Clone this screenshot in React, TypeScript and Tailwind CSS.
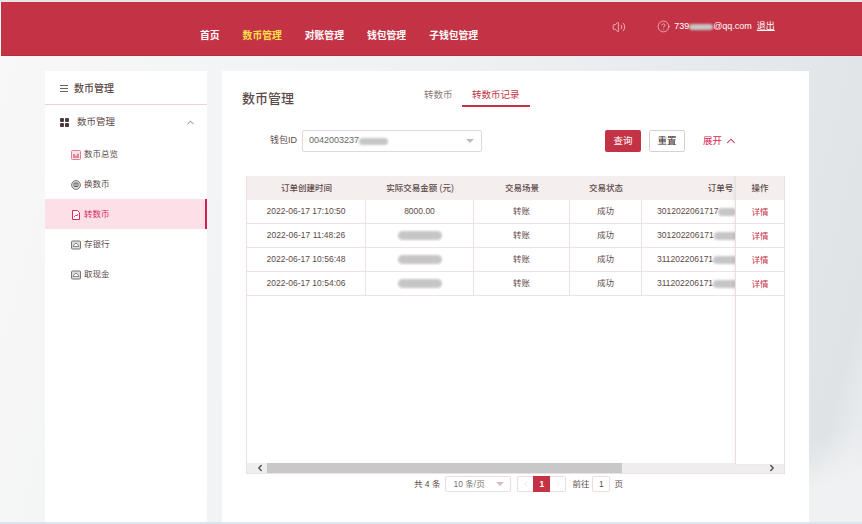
import React from "react";
import { ChevronLeft, ChevronRight, ChevronUp, CircleHelp, Volume2 } from "lucide-react";

const font = "font-['Liberation_Sans','Noto_Sans_CJK_SC',sans-serif]";

const nav = ["首页", "数币管理", "对账管理", "钱包管理", "子钱包管理"];

const rows = [
  { time: "2022-06-17 17:10:50", amount: "8000.00", order: "3012022061717", orderBlur: "w-[18px]" },
  { time: "2022-06-17 11:48:26", amount: "", order: "301202206171", orderBlur: "w-[26px]" },
  { time: "2022-06-17 10:56:48", amount: "", order: "311202206171", orderBlur: "w-[26px]" },
  { time: "2022-06-17 10:54:06", amount: "", order: "311202206171", orderBlur: "w-[26px]" },
];

const Blur = ({ className }: { className: string }) => (
  <span className={`inline-block rounded-full bg-[#c6c6c6] blur-[1px] ${className}`} />
);

const MenuIcon = ({ kind, active }: { kind: string; active?: boolean }) => {
  if (kind === "chart") {
    return (
      <svg width="10" height="10" viewBox="0 0 10 10" fill="none">
        <rect x="0.5" y="0.5" width="9" height="9" rx="1" fill="#fbe3ea" stroke="#e8799a" />
        <path d="M3 4v4M5 5.5V8M7 3.5V8" stroke="#c43345" strokeWidth="1" />
      </svg>
    );
  }
  if (kind === "coin") {
    return (
      <svg width="10" height="10" viewBox="0 0 10 10" fill="none">
        <circle cx="5" cy="5" r="4.4" fill="#ddd" stroke="#777" />
        <path d="M3 3h4v3.5H3zM5 3v4" stroke="#555" strokeWidth="0.8" />
      </svg>
    );
  }
  if (kind === "doc") {
    return (
      <svg width="10" height="10" viewBox="0 0 10 10" fill="none">
        <path d="M1.5.5h5l2 2v7h-7z" fill="#fff" stroke={active ? "#e0245e" : "#777"} />
        <path d="M3 7l2-2 1 1 1-2" stroke={active ? "#e0245e" : "#777"} strokeWidth="0.8" />
      </svg>
    );
  }
  return (
    <svg width="10" height="10" viewBox="0 0 10 10" fill="none">
      <rect x="0.5" y="1" width="9" height="8" rx="1" fill="#ddd" stroke="#777" />
      <path d="M2 6.5L4 3.5h2L8 6.5z" fill="#fff" stroke="#666" strokeWidth="0.7" />
    </svg>
  );
};

const subMenu = [
  { label: "数币总览", icon: "chart" },
  { label: "换数币", icon: "coin" },
  { label: "转数币", icon: "doc", active: true },
  { label: "存银行", icon: "bank" },
  { label: "取现金", icon: "bank" },
];

const cols = "grid grid-cols-[119px_108px_96px_72px_1fr]";

export default function App() {
  return (
    <div
      className={`${font} flex h-[524px] w-[862px] flex-col overflow-hidden bg-[linear-gradient(160deg,transparent_88%,#f0f1f3_94%),linear-gradient(105deg,#f8f8f8_0%,#f3f4f5_25%,#f0f1f3_45%,#e8ebee_70%,#dfe3e6_94%,#e8ebee_97%,#dee2e5_100%)]`}
    >
      <div className="h-[2px] bg-[#e9e4e4]" />
      <header className="relative ml-px flex h-[54px] shrink-0 border-b border-[#b52c3e] bg-[#c43345]">
        <nav className="ml-[199px] flex h-full items-center gap-[23px] pt-[16px] text-[9.8px] font-bold text-white">
          {nav.map((item, i) => (
            <span key={item} className={i === 1 ? "text-[#fde047]" : ""}>
              {item}
            </span>
          ))}
        </nav>
        <div className="ml-[134px] flex h-full items-start pt-[18px] text-[9px] text-white">
          <Volume2 size={14} strokeWidth={1} />
          <CircleHelp size={13} strokeWidth={1} className="ml-[31px] mr-[4px]" />
          <span className="flex items-center">
            739
            <Blur className="h-[6px] w-[24px]" />
            @qq.com
          </span>
          <span className="ml-[5px] underline">退出</span>
        </div>
      </header>

      <div className="flex min-h-0 flex-1 items-stretch gap-[15px] pl-[45px] pt-[15px]">
        {/* sidebar */}
        <aside className="w-[162px] shrink-0 bg-white text-[#5c4a4a]">
          <div className="flex h-[34px] items-center gap-[6px] border-b border-[#ecd2d7] pl-[15px] pt-[1px] text-[10px] font-medium">
            <span className="flex w-[8px] flex-col gap-[2px]">
              <span className="h-px bg-[#666]" />
              <span className="h-px bg-[#666]" />
              <span className="h-px bg-[#666]" />
            </span>
            数币管理
          </div>
          <div className="flex h-[34px] items-center pl-[15px] pr-[11px] text-[9.5px]">
            <span className="mr-[8px] grid grid-cols-2 gap-px">
              <span className="h-[4px] w-[4px] rounded-[1px] bg-[#4b3a3a]" />
              <span className="h-[4px] w-[4px] rounded-[1px] bg-[#4b3a3a]" />
              <span className="h-[4px] w-[4px] rounded-[1px] bg-[#4b3a3a]" />
              <span className="h-[4px] w-[4px] rounded-[1px] bg-[#4b3a3a]" />
            </span>
            数币管理
            <ChevronUp size={11} strokeWidth={1.4} className="ml-auto text-[#444]" />
          </div>
          <div className="flex flex-col">
            {subMenu.map((m) => (
              <div
                key={m.label}
                className={`flex h-[30px] items-center gap-[3px] pl-[26px] pt-px text-[8.5px] ${
                  m.active ? "border-r-2 border-[#d81e4f] bg-[#fce0e7] text-[#e0245e]" : ""
                }`}
              >
                <MenuIcon kind={m.icon} active={m.active} />
                {m.label}
              </div>
            ))}
          </div>
        </aside>

        {/* main */}
        <main className="flex w-[587px] shrink-0 flex-col bg-white pl-[20px] pr-[24px] text-[#5c4a4a]">
          <div className="relative flex h-[36px] items-start">
            <h1 className="mt-[19px] text-[13px] font-medium leading-[18px]">数币管理</h1>
            <div className="ml-[130px] flex pt-[17px] text-[9.5px]">
              <span className="w-[39px] text-[#8a7b7b]">转数币</span>
              <span className="ml-[-1px] border-b-2 border-[#c43345] px-[10px] pb-[3px] text-[#c43345]">
                转数币记录
              </span>
            </div>
          </div>

          <div className="mt-[23px] flex h-[22px] items-center pl-[28px] text-[9px]">
            <span className="mr-[5px]">钱包ID</span>
            <div className="flex h-[22px] w-[180px] items-center rounded-[2px] border border-[#e8d5d8] pl-[6px] pr-[7px] text-[9px] text-[#666]">
              0042003237
              <Blur className="h-[7px] w-[29px]" />
              <span className="ml-auto h-0 w-0 border-x-[4px] border-t-[4px] border-x-transparent border-t-[#c4b8b8]" />
            </div>
            <button className="ml-[123px] h-[22px] w-[36px] rounded-[2px] bg-[#c43345] text-[9.5px] text-white">
              查询
            </button>
            <button className="ml-[8px] h-[22px] w-[36px] rounded-[2px] border border-[#d8d0d0] text-[9.5px] text-[#3b2a2a]">
              重置
            </button>
            <span className="ml-[18px] flex items-center gap-[2px] text-[9.5px] text-[#d81e4f]">
              展开
              <ChevronUp size={14} strokeWidth={1.8} />
            </span>
          </div>

          {/* table */}
          <div className="relative mt-[24px] ml-[4px] flex h-[298px] w-[539px] flex-col overflow-hidden border-x border-b border-[#f0dfe2] text-[8.5px]">
            <div className={`${cols} h-[24px] shrink-0 items-center bg-[#f5eeee] text-center font-medium`}>
              <span>订单创建时间</span>
              <span>实际交易金额 (元)</span>
              <span>交易场景</span>
              <span>交易状态</span>
              <span className="pl-[15px]">订单号</span>
            </div>
            {rows.map((r) => (
              <div
                key={r.time}
                className={`${cols} h-[24px] shrink-0 border-b border-[#efe2e5] text-center leading-[23px]`}
              >
                <span className="border-r border-[#efe2e5]">{r.time}</span>
                <span className="border-r border-[#efe2e5]">
                  {r.amount || <Blur className="h-[9px] w-[44px] align-middle" />}
                </span>
                <span className="border-r border-[#efe2e5]">转账</span>
                <span className="border-r border-[#efe2e5]">成功</span>
                <span className="whitespace-nowrap pl-[15px] text-left">
                  {r.order}
                  <Blur className={`h-[8px] align-middle ${r.orderBlur}`} />
                </span>
              </div>
            ))}

            {/* scroll bar */}
            <div className="mt-auto flex h-[10px] shrink-0 items-center bg-[#eeeeee]">
              <ChevronLeft size={10} strokeWidth={3} className="ml-[6px] w-[14px] shrink-0 text-[#444]" />
              <div className="h-full w-[355px] bg-[#c8c8c8]" />
              <ChevronRight size={10} strokeWidth={3} className="ml-auto mr-[7px] text-[#444]" />
            </div>

            {/* fixed column */}
            <div className="absolute right-0 top-0 flex h-[288px] w-[49px] flex-col border-l border-[#e9dfe1] bg-white text-center shadow-[-2px_0_3px_rgba(0,0,0,0.04)]">
              <div className="h-[24px] shrink-0 bg-[#f5eeee] font-medium leading-[24px]">操作</div>
              {rows.map((r) => (
                <div key={r.time} className="h-[24px] shrink-0 border-b border-[#efe2e5] leading-[25px] text-[#c43345]">
                  详情
                </div>
              ))}
            </div>
          </div>

          {/* pagination */}
          <div className="mt-[1px] flex h-[18px] items-center pl-[172px] text-[8.5px]">
            <span>共 4 条</span>
            <div className="ml-[5px] flex h-[16px] w-[66px] items-center rounded-[2px] border border-[#eedcdf] pl-[7px] pr-[6px] text-[#777]">
              10 条/页
              <span className="ml-auto h-0 w-0 border-x-[4px] border-t-[4px] border-x-transparent border-t-[#d8bcc0]" />
            </div>
            <div className="ml-[6px] flex h-[16px] items-center">
              <span className="flex h-[16px] w-[16px] items-center justify-center rounded-l-[2px] border border-r-0 border-[#eedcdf]">
                <ChevronLeft size={10} strokeWidth={1} className="text-[#ccc]" />
              </span>
              <span className="flex h-[16px] w-[17px] items-center justify-center bg-[#c43345] font-bold text-white">1</span>
              <span className="flex h-[16px] w-[16px] items-center justify-center rounded-r-[2px] border border-l-0 border-[#eedcdf]">
                <ChevronRight size={10} strokeWidth={1} className="text-[#ccc]" />
              </span>
            </div>
            <span className="ml-[6px]">前往</span>
            <span className="ml-[3px] flex h-[16px] w-[18px] items-center justify-center rounded-[2px] border border-[#eedcdf]">1</span>
            <span className="ml-[4px]">页</span>
          </div>
        </main>
      </div>
      <div className="h-[2px] shrink-0 bg-[#d9e8f0]" />
    </div>
  );
}
